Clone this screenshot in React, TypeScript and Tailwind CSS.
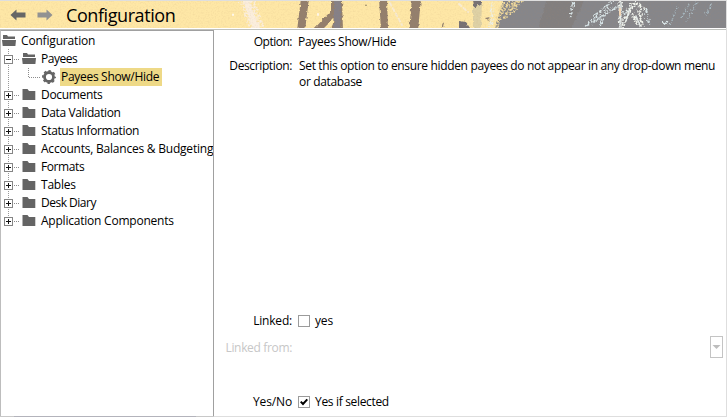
import React from "react";

const FONT = "font-['Open_Sans','Noto_Sans',sans-serif]";

function Banner() {
  return (
    <svg className="absolute inset-0 h-full w-full" viewBox="0 0 726 27" preserveAspectRatio="none">
      <defs>
        <filter id="rough" x="0" y="-10" width="726" height="47" filterUnits="userSpaceOnUse" colorInterpolationFilters="sRGB">
          <feTurbulence type="fractalNoise" baseFrequency="0.35" numOctaves="2" seed="4" result="n" />
          <feDisplacementMap in="SourceGraphic" in2="n" scale="4" xChannelSelector="R" yChannelSelector="G" />
        </filter>
        <filter id="scratchy" x="0" y="-10" width="726" height="47" filterUnits="userSpaceOnUse" colorInterpolationFilters="sRGB">
          <feTurbulence type="fractalNoise" baseFrequency="0.5" numOctaves="2" seed="9" result="n" />
          <feDisplacementMap in="SourceGraphic" in2="n" scale="7" xChannelSelector="R" yChannelSelector="G" result="d" />
          <feColorMatrix in="n" type="matrix" values="0 0 0 0 0  0 0 0 0 0  0 0 0 0 0  0 0 7 0 -2.9" result="m" />
          <feComposite in="d" in2="m" operator="in" />
        </filter>
        <filter id="grain" x="0" y="0" width="100%" height="100%" colorInterpolationFilters="sRGB">
          <feTurbulence type="fractalNoise" baseFrequency="0.6" numOctaves="2" seed="2" />
          <feColorMatrix type="matrix" values="0 0 0 0 0.7  0 0 0 0 0.55  0 0 0 0 0.4  0 0 0.9 0 -0.4" />
        </filter>
      </defs>
      <rect width="726" height="27" fill="#fee7a6" />
      <g filter="url(#scratchy)">
        <path d="M239 -2H254L265 28H249Z" fill="#fbeeda" />
      </g>
      <path d="M243 0H249L260 27H253Z" fill="#fbeedd" filter="url(#rough)" />
      <g filter="url(#rough)">
        <path d="M301 -3H309L305 30H297Z M331 -3H342L343 30H331L334 17L321 30H312L331 10Z M379 -3H387L388 30H381Z M412 -3H421L418 30H409Z" fill="#937f6d" />
        <path d="M334 -3H341L340 30H334Z" fill="#858087" />
        <path d="M473 5L482 0L481 30H473Z" fill="#ded1a5" />
        <path d="M473 -3H482V2L474 7Z M459 20L466 21L472 30H459Z" fill="#777174" />
        <path d="M485 17L490 16L488 20Z M443 21L444 23L442 30H441Z" fill="#938270" />
        <path d="M504 -3H740V30H494Z" fill="#86868a" />
        <path d="M547 -3H585L570 30H538Z" fill="#827f7f" />
      </g>
      <path d="M720 0H726V27H720Z" fill="#86868a" />
      <g fill="none" strokeLinecap="round">
        <g filter="url(#scratchy)">
          <path d="M503 0L497 26M510 0L501 13M522 0L507 12M515 8L504 17M517 1L509 5" stroke="#eed89b" strokeWidth="3.4" />
          <path d="M492 3V22M490 21V26" stroke="#eef0e5" strokeWidth="3" />
          <path d="M573 1L571 15M612 0L585 26M603 8L594 15M608 7L600 24M619 4L592 22M646 8L649 23M634 5L624 12M664 22H668" stroke="#d7e4e7" strokeWidth="2.4" />
          <path d="M620 0L621 27M624 22L631 5L638 3L643 8M633 14L641 26M639 10L642 24" stroke="#f0f4ed" strokeWidth="3.8" />
          <path d="M677 7L670 24M689 3L682 16M697 1L687 19M712 3L706 13" stroke="#a9bbc4" strokeWidth="1.5" />
        </g>
        <path d="M621 1L620 26M626 20L630 7M636 15L640 24" stroke="#e8f0ef" strokeWidth="1.2" />
        <path d="M620 8V14" stroke="#f5d9b8" strokeWidth="2" />
        <path d="M390 2L402 24M459 3L468 11" stroke="#f9ecd2" strokeWidth="2" strokeDasharray="3 3" />
        <path d="M318 13V14M233 13.5V14" stroke="#fff8ec" strokeWidth="2" />
        <path d="M366 4V4.5" stroke="#756b57" strokeWidth="1.2" />
      </g>
      <rect width="726" height="27" filter="url(#grain)" opacity=".3" />
    </svg>
  );
}

function Arrow({ back = false }: { back?: boolean }) {
  return (
    <svg width="16" height="12" viewBox="0 0 16 12" className={back ? "" : "-scale-x-100"}>
      <path d="M0.5 6L6.5 .5V3.5H15.5V8.5H6.5V11.5Z" fill={back ? "#666" : "#929292"} />
    </svg>
  );
}

function Folder({ open = false }: { open?: boolean }) {
  return (
    <svg width="14" height="12" viewBox="0 0 14 12" fill="#646464" className="shrink-0">
      {open ? (
        <path d="M1 0H5L6 1.5H13V4H1Z M0 5H14L13.4 11H.7Z" />
      ) : (
        <path d="M.5 0H5.5L7 2H13.3V11H.5Z" />
      )}
    </svg>
  );
}

function Gear() {
  return (
    <svg width="14" height="14" viewBox="0 0 14 14" className="shrink-0">
      <circle cx="7" cy="7" r="4.5" fill="none" stroke="#646464" strokeWidth="2.8" />
      <circle cx="7" cy="7" r="6.1" fill="none" stroke="#646464" strokeWidth="1.7" strokeDasharray="2.5 2.29" strokeDashoffset="1.25" />
    </svg>
  );
}

function Expander({ open = false }: { open?: boolean }) {
  return (
    <svg width="17" height="18" viewBox="0 0 17 18" shapeRendering="crispEdges" fill="none" className="shrink-0">
      <path d="M9 9.5H17" stroke="#8c8c8c" strokeDasharray="1 1" />
      <rect x="1.5" y="5.5" width="8" height="8" fill="white" stroke="#858585" />
      <path d={open ? "M3 9.5H8" : "M3 9.5H8M5.5 7V12"} stroke="#111" />
    </svg>
  );
}

const groups = [
  ["Documents", "tracking-[-0.33px]"],
  ["Data Validation", "tracking-[-0.38px]"],
  ["Status Information", "tracking-[-0.36px]"],
  ["Accounts, Balances & Budgeting", "tracking-[-0.22px]"],
  ["Formats", "tracking-[-0.4px]"],
  ["Tables", "tracking-[-0.22px]"],
  ["Desk Diary", "tracking-[-0.5px]"],
  ["Application Components", "tracking-[-0.22px]"],
];

function Tree() {
  return (
    <aside className="relative w-[214px] shrink-0 overflow-hidden border-t border-r border-l border-[#a0a0a0] border-l-[#bdbdbd] pt-px">
      <div className="absolute top-[18px] left-[7px] h-[171px] border-l border-dotted border-[#999]" />
      <div className="flex h-[18px] items-center pl-px">
        <Folder open />
        <span className="ml-[5px] tracking-[-0.18px]">Configuration</span>
      </div>
      <div className="relative flex h-[18px] items-center pl-[2px]">
        <Expander open />
        <span className="ml-[2px] flex"><Folder open /></span>
        <span className="ml-[5px] tracking-[-0.5px]">Payees</span>
      </div>
      <div className="flex h-[18px] items-center pl-[27px]">
        <svg width="12" height="18" shapeRendering="crispEdges" className="shrink-0">
          <path d="M.5 0V9.5H12" fill="none" stroke="#8c8c8c" strokeDasharray="1 1" />
        </svg>
        <span className="ml-[2px] flex"><Gear /></span>
        <span className="ml-1 h-[18px] w-[102px] bg-[#eed987] pl-px leading-[18px] tracking-[-0.3px]">Payees Show/Hide</span>
      </div>
      {groups.map(([name, spacing]) => (
        <div key={name} className="relative flex h-[18px] items-center pl-[2px]">
          <Expander />
          <span className="ml-[2px] flex"><Folder /></span>
          <span className={`ml-[5px] ${spacing}`}>{name}</span>
        </div>
      ))}
    </aside>
  );
}

function CheckBox({ checked = false }: { checked?: boolean }) {
  return (
    <span className="flex h-3 w-3 items-center justify-center border border-[#9b9b9b] bg-white">
      {checked && (
        <svg width="8" height="8" viewBox="0 0 8 8">
          <path d="M.7 3.6L3 6L7.3 1.4" fill="none" stroke="#000" strokeWidth="2" />
        </svg>
      )}
    </span>
  );
}

export default function App() {
  return (
    <div className={`${FONT} flex h-[417px] w-[727px] flex-col overflow-hidden border-t border-r border-[#dedede] bg-white text-[12px] leading-[16px] whitespace-nowrap text-black`}>
      <header className="relative h-[27px] shrink-0 overflow-hidden">
        <Banner />
        <div className="relative flex h-full items-center pl-[10px]">
          <Arrow back />
          <span className="ml-[11px]"><Arrow /></span>
          <h1 className="ml-[13px] pt-[2px] text-[18px] leading-[27px] tracking-[-0.42px]">Configuration</h1>
        </div>
      </header>
      <div className="mt-px h-px shrink-0 bg-[#bfc1bd]" />
      <div className="flex min-h-0 flex-1">
        <Tree />
        <main className="flex min-w-0 flex-1 flex-col">
          <div className="mt-1 flex h-4">
            <span className="w-[78px] text-right tracking-[-0.5px]">Option:</span>
            <span className="ml-[6px] tracking-[-0.3px]">Payees Show/Hide</span>
          </div>
          <div className="mt-2 flex h-8">
            <span className="w-[78px] text-right tracking-[-0.38px]">Description:</span>
            <p className="ml-[7px] tracking-[-0.34px]">Set this option to ensure hidden payees do not appear in any drop-down menu<br />or database</p>
          </div>
          <div className="mt-[223px] flex h-4 items-center">
            <span className="w-[78px] text-right tracking-[-0.2px]">Linked:</span>
            <span className="ml-[6px]"><CheckBox /></span>
            <span className="ml-[5px] tracking-[-0.14px]">yes</span>
          </div>
          <div className="mt-[7px] flex h-[22px] items-center justify-between pr-[3px]">
            <span className="w-[78px] pt-[2px] text-right tracking-[-0.34px] text-[#c7c7c7]">Linked from:</span>
            <span className="flex h-[22px] w-[13px] items-center justify-center border border-[#c4c4c4]">
              <svg width="9" height="4"><path d="M.5 0H8.5L4.5 4Z" fill="#bdbdbd" /></svg>
            </span>
          </div>
          <div className="mt-[36px] flex h-4 items-center">
            <span className="w-[78px] text-right tracking-[-0.14px]">Yes/No</span>
            <span className="ml-[6px]"><CheckBox checked /></span>
            <span className="ml-[5px] tracking-[-0.33px]">Yes if selected</span>
          </div>
        </main>
      </div>
      <footer className="flex h-px shrink-0 bg-[#dedede]">
        <div className="w-[14px] bg-[#c8c8c8]" />
        <div className="w-[182px] bg-[#b3b3bb]" />
        <div className="w-[18px] bg-[#c8c8c8]" />
      </footer>
    </div>
  );
}
